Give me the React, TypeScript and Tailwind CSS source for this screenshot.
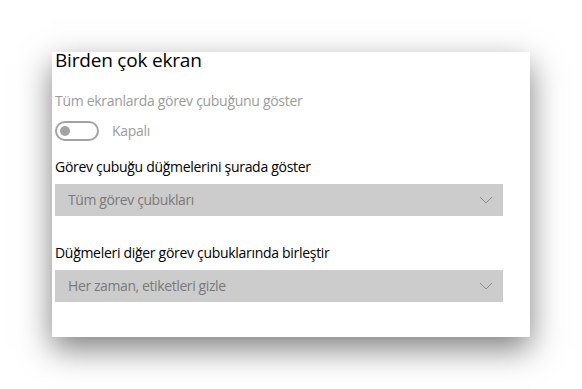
import React from "react";

const font = { fontFamily: '"Open Sans", "Noto Sans", sans-serif' };

function Chevron() {
  return (
    <svg width="14" height="8" viewBox="0 0 14 8" className="text-[#8c8c8c]">
      <path d="M1 1 L7 7 L13 1" fill="none" stroke="currentColor" strokeWidth="1" />
    </svg>
  );
}

function Dropdown({ value }: { value: string }) {
  return (
    <div className="flex items-center justify-between w-[448px] h-[32px] bg-[#cccccc] pl-[13px] pr-[10px]">
      <span className="text-[14px] leading-[20px] tracking-[-0.4px] text-[#7a7a7a]">{value}</span>
      <Chevron />
    </div>
  );
}

export default function App() {
  return (
    <div className="w-[582px] h-[389px] bg-white pl-[52px] pt-[52px] overflow-hidden" style={font}>
      <div className="w-[478px] h-[285px] bg-white shadow-[0_12px_30px_rgba(0,0,0,0.5)] pl-[3px] flex flex-col">
        {/* Titel */}
        <div className="mt-[-2px] text-[19px] leading-[20px] tracking-[-0.2px] text-black">Birden çok ekran</div>

        <div className="mt-[21px] text-[14px] leading-[20px] tracking-[-0.3px] text-[#9c9c9c]">
          Tüm ekranlarda görev çubuğunu göster
        </div>

        <div className="mt-[10px] flex items-center h-[20px]">
          <div className="w-[44px] h-[20px] rounded-full border-2 border-[#a3a3a3] flex items-center pl-[3px]">
            <div className="w-[10px] h-[10px] rounded-full bg-[#a3a3a3]" />
          </div>
          <span className="ml-[13px] text-[14px] leading-[20px] tracking-[-0.3px] text-[#9c9c9c]">Kapalı</span>
        </div>

        <div className="mt-[16px] text-[14px] leading-[20px] tracking-[-0.3px] text-black">
          Görev çubuğu düğmelerini şurada göster
        </div>
        <div className="mt-[7px]">
          <Dropdown value="Tüm görev çubukları" />
        </div>

        <div className="mt-[27px] text-[14px] leading-[20px] tracking-[-0.3px] text-black">
          Düğmeleri diğer görev çubuklarında birleştir
        </div>
        <div className="mt-[7px]">
          <Dropdown value="Her zaman, etiketleri gizle" />
        </div>
      </div>
    </div>
  );
}
